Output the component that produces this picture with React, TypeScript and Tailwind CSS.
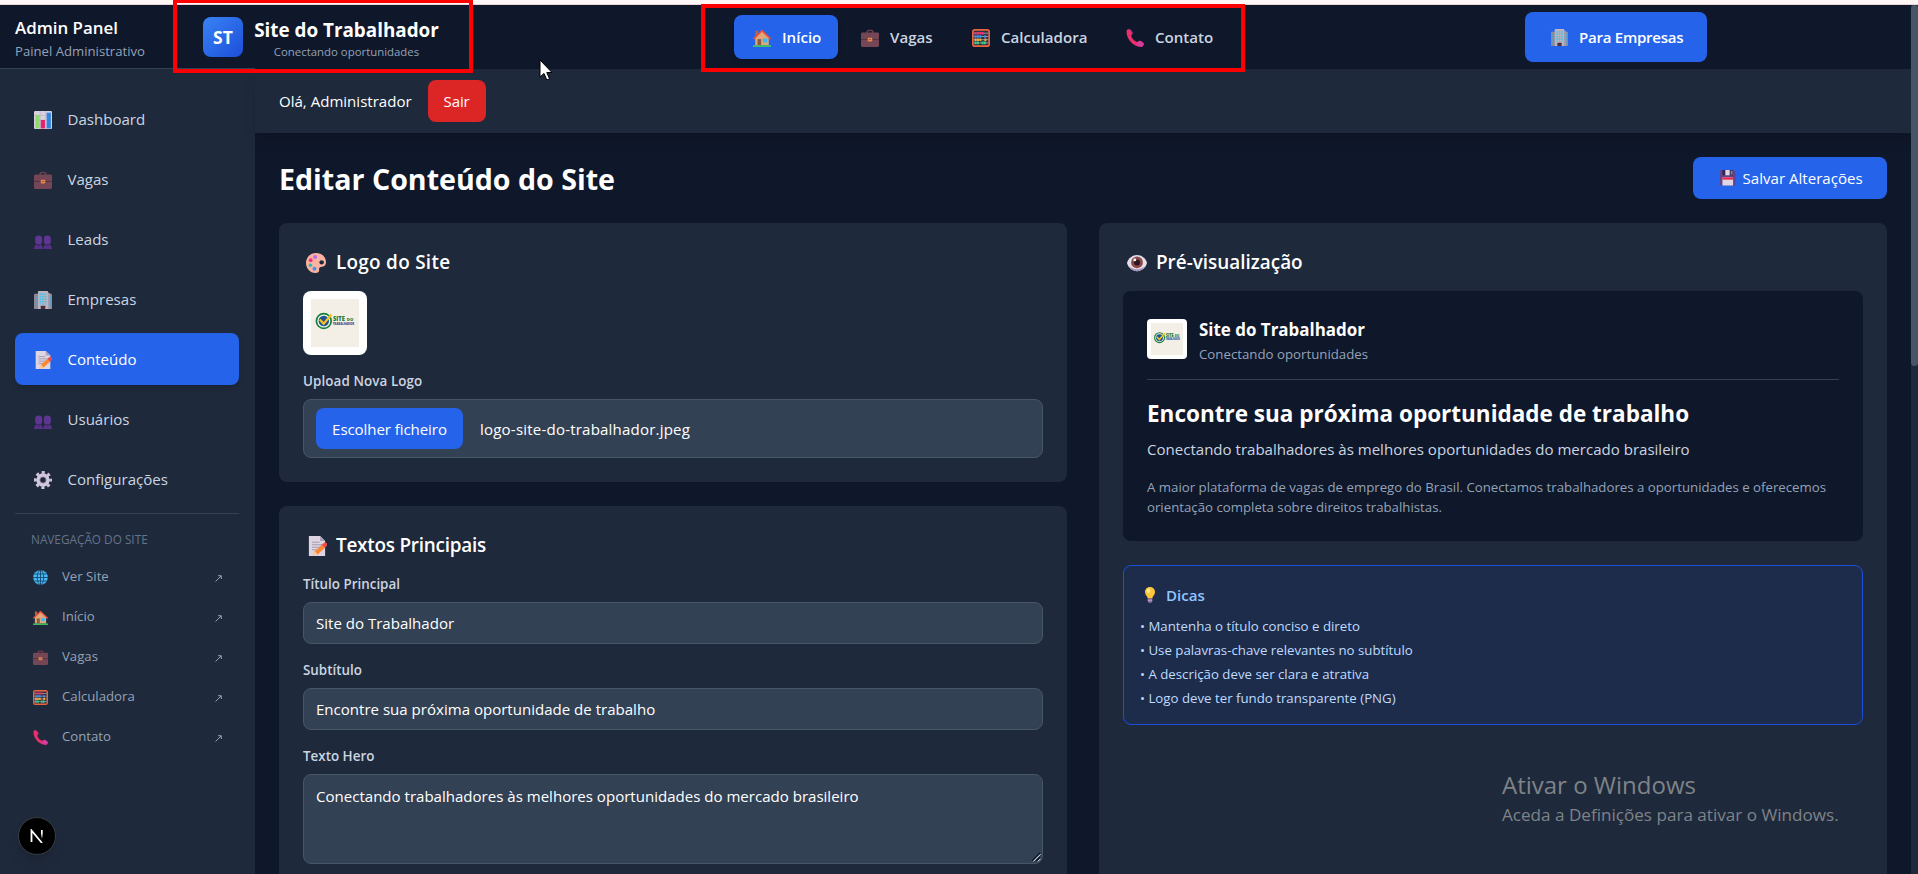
import type { ReactNode } from "react";

type IconName =
  | "chart" | "briefcase" | "people" | "building" | "memo" | "gear"
  | "globe" | "house" | "abacus" | "phone" | "disk" | "palette" | "eye" | "bulb";

const drawings: Record<IconName, ReactNode> = {
  chart: (
    <>
      <rect width="32" height="32" rx="2" fill="#d9d0e0" />
      <path d="M0 8h32M0 16h32M0 24h32M11 0v32M21 0v32" stroke="#b9aec6" strokeWidth="1" />
      <rect x="2.500" y="7" width="7.500" height="24" fill="#8fdc6e" />
      <rect x="12" y="16" width="7.500" height="15" fill="#e3256f" />
      <rect x="22.500" y="3" width="7.500" height="28" fill="#2f87de" />
    </>
  ),
  briefcase: (
    <>
      <path d="M11 7V4.500a2 2 0 0 1 2-2h6a2 2 0 0 1 2 2V7" fill="none" stroke="#6b3f4c" strokeWidth="2.600" />
      <rect x="0" y="6" width="32" height="26" rx="2.500" fill="#754656" />
      <path d="M0 18.500h32" stroke="#55303d" strokeWidth="1.600" />
      <rect x="12" y="15.500" width="8" height="6.500" rx="1.500" fill="#e68a4e" />
      <path d="M14 18.700h4" stroke="#8a4a33" strokeWidth="1.400" />
    </>
  ),
  people: (
    <>
      <path d="M0 32c0-6 3-8.500 8-8.500s7.500 2.500 7.500 8.500z" fill="#573089" />
      <path d="M16.500 32c0-6 3-8.500 7.500-8.500s8 2.500 8 8.500z" fill="#573089" />
      <rect x="2" y="8" width="12.500" height="16" rx="6" fill="#5e358f" />
      <rect x="17.500" y="8" width="12.500" height="16" rx="6" fill="#5e358f" />
      <path d="M5 23h6l-1 4H6zM21 23h6l-1 4h-4z" fill="#472672" />
    </>
  ),
  building: (
    <>
      <rect x="0" y="5" width="32" height="27" rx="1.500" fill="#8f8796" />
      <rect x="7" y="0" width="18" height="32" rx="1.500" fill="#bdb4c0" />
      <path d="M25 2l4 3v27h-4z" fill="#a79eac" />
      <path d="M11.500 4v20M16 4v20M20.500 4v20" stroke="#41c3ee" strokeWidth="3" strokeDasharray="3 1.500" />
      <path d="M3.500 9v20M28.800 9v20" stroke="#41a9e0" strokeWidth="2.200" strokeDasharray="3 1.800" />
      <rect x="12" y="26" width="8" height="6" rx="1" fill="#4b2f3c" />
    </>
  ),
  memo: (
    <>
      <path d="M3 0h18l8 8v24H3z" fill="#ddd5e2" />
      <path d="M21 0l8 8h-8z" fill="#aba0b6" />
      <path d="M8 10h12M8 14h16M8 18h14M8 22h8" stroke="#a79bb3" strokeWidth="1.700" />
      <path d="M10 31l2.500-6.500L23.500 14l5 5L17 29.500z" fill="#f98a32" />
      <path d="M23.500 14l3-2.500a3 3 0 0 1 5 4.500l-3 3z" fill="#ef4b4b" />
      <path d="M10 31l2.500-6.500 4.500 5z" fill="#ffd0a0" />
    </>
  ),
  gear: (
    <>
      <circle cx="16" cy="16" r="13.500" fill="none" stroke="#cfc4dc" strokeWidth="5" strokeDasharray="5.600 5" strokeDashoffset="2.800" />
      <circle cx="16" cy="16" r="8.600" fill="none" stroke="#d3c9df" strokeWidth="6.500" />
      <circle cx="16" cy="16" r="5.600" fill="none" stroke="#8f83a0" strokeWidth="1.500" />
    </>
  ),
  globe: (
    <>
      <circle cx="16" cy="16" r="15.500" fill="#47b9f4" />
      <g fill="none" stroke="#14486f" strokeWidth="1.900">
        <ellipse cx="16" cy="16" rx="7" ry="15.500" />
        <path d="M16 0v32M0 16h32M3 8.500h26M3 23.500h26" />
      </g>
    </>
  ),
  house: (
    <>
      <path d="M4 3h5v9H4z" fill="#b9643f" />
      <path d="M4 15L16 4l12 11v14H4z" fill="#e0a877" />
      <path d="M1.500 17L16 3l14.500 14" fill="none" stroke="#e8503f" strokeWidth="2.800" strokeLinejoin="round" strokeLinecap="round" />
      <rect x="8" y="18" width="6.500" height="11" fill="#8b5a41" />
      <rect x="17.500" y="17" width="8" height="7" rx="1" fill="#43b6f5" />
      <path d="M0 30.300h32" stroke="#3fca62" strokeWidth="3" />
    </>
  ),
  abacus: (
    <>
      <rect x="1.500" y="1.500" width="29" height="29" rx="3.500" fill="#2a3242" stroke="#f0623d" strokeWidth="3" />
      <path d="M3 7.500h26M3 13.300h26M3 19h26M3 24.700h26" stroke="#aeb4c4" strokeWidth="1.400" />
      <g strokeWidth="4.600" strokeDasharray="3.600 0.600">
        <path d="M4.500 7.500h17" stroke="#ee3470" />
        <path d="M4.500 13.300h12.400M21.500 13.300h4" stroke="#3d90e8" />
        <path d="M4.500 19h12.400M22 19h4" stroke="#f6a93a" />
        <path d="M4.500 24.700h8.200M17 24.700h8.200" stroke="#3ecb82" />
      </g>
    </>
  ),
  phone: (
    <>
      <path d="M1 3C1 1 5-.500 7 1l4 5.500c1 1.600-1.500 3.500-2 5 1 5 6.500 10.500 11.500 11.500 1.500-.500 3.500-3 5-2l5.500 4c1.500 2-1 6.500-3 6.500C14 33 0 18 1 3z" fill="#ec2f6b" />
      <path d="M20.500 23c1.500-.500 3.500-3 5-2l5.500 4c1.500 2-1 6.500-3 6.500-3 .200-6.500-1-9.500-3z" fill="#d53aa0" />
      <path d="M7 1l4 5.500c1 1.600-1.500 3.500-2 5" fill="none" stroke="#a8348f" strokeWidth="2" />
    </>
  ),
  disk: (
    <>
      <path d="M0 2a2 2 0 0 1 2-2h26l4 4v26a2 2 0 0 1-2 2H2a2 2 0 0 1-2-2z" fill="#5f4590" />
      <rect x="5" y="0" width="22" height="11" fill="#35254f" />
      <rect x="11" y="0" width="9" height="11" fill="#ddd6e6" />
      <rect x="22" y="1.500" width="4" height="8" fill="#8a7ba5" />
      <rect x="5" y="15" width="22" height="17" fill="#dfd6e6" />
      <rect x="5" y="15" width="22" height="5" fill="#e5304f" />
    </>
  ),
  palette: (
    <>
      <path d="M16 0C6.500 0 0 7.500 0 16s6.500 16 15 16c4 0 6-1.500 6-4 0-3-.500-5 3-5.500C29 22 32 20 32 14.500 32 6 25 0 16 0z" fill="#fbb3a0" />
      <circle cx="25" cy="15" r="3.600" fill="#1e293b" />
      <circle cx="14.500" cy="6.500" r="3.200" fill="#c06af0" />
      <circle cx="7.500" cy="11.500" r="3" fill="#ee2f76" />
      <circle cx="7" cy="19.500" r="2.900" fill="#2fb9b4" />
      <circle cx="13.500" cy="25" r="3.200" fill="#4a90ea" />
    </>
  ),
  eye: (
    <>
      <path d="M0 16C2 8 9 3 16 3s14 5 16 13c-2 8-9 13-16 13S2 24 0 16z" fill="#e6dfec" />
      <path d="M2 20c3 6 8 9 14 9s11-3 14-9c-4 4-9 6-14 6S6 24 2 20z" fill="#a596b5" />
      <circle cx="16" cy="15" r="9.500" fill="#8d4b48" />
      <circle cx="16" cy="15" r="4.800" fill="#2b1523" />
      <circle cx="12.500" cy="11" r="2.300" fill="#fff" />
    </>
  ),
  bulb: (
    <>
      <path d="M16 0c6 0 10 4.500 10 10 0 6-5 8-5.500 13h-9C11 18 6 16 6 10 6 4.500 10 0 16 0z" fill="#fcc63c" />
      <ellipse cx="13" cy="7.500" rx="3.500" ry="4.500" fill="#ffe79a" />
      <path d="M11.500 23h9v5c0 2-2 4-4.500 4s-4.500-2-4.500-4z" fill="#8d6f9e" />
      <path d="M11.500 26.500h9" stroke="#cdbbd8" strokeWidth="1.500" />
    </>
  ),
};

function Icon({ name, className }: { name: IconName; className: string }) {
  return (
    <svg viewBox="0 0 32 32" className={`shrink-0 ${className}`} aria-hidden="true">
      {drawings[name]}
    </svg>
  );
}

function BrandImage({ className }: { className: string }) {
  return (
    <svg viewBox="0 0 48 48" className={className}>
      <rect width="48" height="48" fill="#f4efe6" />
      <circle cx="12.800" cy="22" r="7.400" fill="#f4efe6" stroke="#15803d" strokeWidth="1.700" />
      <circle cx="12.800" cy="22" r="5.200" fill="#1c5594" />
      <path d="M8.800 20.500l3.800 4.300L20.500 15.500" fill="none" stroke="#f5c022" strokeWidth="2.300" />
      <text x="22" y="21.500" className="font-['Open_Sans',sans-serif] text-[6.500px] font-extrabold" fill="#1a7d3f" textLength="12" lengthAdjust="spacingAndGlyphs">SITE</text>
      <text x="35.800" y="21.500" className="font-['Open_Sans',sans-serif] text-[4.200px] font-extrabold" fill="#1a7d3f" textLength="6.500">DO</text>
      <text x="21.700" y="26" className="font-['Open_Sans',sans-serif] text-[4.200px] font-extrabold" fill="#1c5594" textLength="21.500" lengthAdjust="spacingAndGlyphs">TRABALHADOR</text>
    </svg>
  );
}

const adminLinks: { icon: IconName; label: string; active?: boolean }[] = [
  { icon: "chart", label: "Dashboard" },
  { icon: "briefcase", label: "Vagas" },
  { icon: "people", label: "Leads" },
  { icon: "building", label: "Empresas" },
  { icon: "memo", label: "Conteúdo", active: true },
  { icon: "people", label: "Usuários" },
  { icon: "gear", label: "Configurações" },
];

const siteLinks: { icon: IconName; label: string }[] = [
  { icon: "globe", label: "Ver Site" },
  { icon: "house", label: "Início" },
  { icon: "briefcase", label: "Vagas" },
  { icon: "abacus", label: "Calculadora" },
  { icon: "phone", label: "Contato" },
];

const mainNav: { icon: IconName; label: string; size: string }[] = [
  { icon: "house", label: "Início", size: "w-[104px] bg-[#2563eb] text-white shadow-md" },
  { icon: "briefcase", label: "Vagas", size: "w-[107px] text-[#cbd5e1]" },
  { icon: "abacus", label: "Calculadora", size: "w-[150px] text-[#cbd5e1]" },
  { icon: "phone", label: "Contato", size: "w-[123px] text-[#cbd5e1]" },
];

function Header() {
  return (
    <header className="flex h-16 shrink-0 bg-[#0f172a]">
      <div className="w-[203px] border-b border-[#334155] pl-[15px] pt-[8.500px]">
        <div className="text-[16.900px]/[28px] font-semibold text-white">Admin Panel</div>
        <div className="-mt-px text-[13.150px]/[20px] text-[#94a3b8]">Painel Administrativo</div>
      </div>
      <div className="w-[52px] border-b border-[#334155] pt-3">
        <div className="flex size-10 items-center justify-center rounded-lg bg-linear-to-br from-[#3b82f6] to-[#1d4ed8] text-[17.500px] font-bold text-white">
          ST
        </div>
      </div>
      <div className="-ml-px w-[185px] whitespace-nowrap pt-[11px] text-center">
        <div className="text-[18.850px]/[28px] font-bold text-white">Site do Trabalhador</div>
        <div className="text-[11.400px]/[16px] text-[#94a3b8]">Conectando oportunidades</div>
      </div>
      <nav className="ml-[295px] flex items-center gap-1">
        {mainNav.map((item) => (
          <a key={item.label} className={`flex h-11 items-center gap-[11px] rounded-lg pl-[19px] text-[15.100px] font-semibold ${item.size}`}>
            <Icon name={item.icon} className="mt-0.5 size-[18px]" />
            {item.label}
          </a>
        ))}
      </nav>
      <a className="ml-[295px] mt-[7px] flex h-[50px] w-[182px] items-center gap-3 rounded-lg bg-[#2563eb] pl-[26px] text-[15.050px] font-semibold whitespace-nowrap text-white">
        <Icon name="building" className="size-[17px]" />
        <span className="-ml-px tracking-[-0.018em]">Para Empresas</span>
      </a>
    </header>
  );
}

function Sidebar() {
  return (
    <aside className="w-[255px] shrink-0 bg-[#1e293b] pl-[15px] pr-4 pt-6">
      <div className="flex flex-col gap-2">
        {adminLinks.map((item) => (
          <a
            key={item.label}
            className={`flex h-[52px] items-center gap-[15.500px] rounded-lg pl-[19px] text-[15.050px] ${
              item.active ? "bg-[#2563eb] text-white shadow-md" : "text-[#cbd5e1]"
            }`}
          >
            <Icon name={item.icon} className="mt-0.5 size-[18px]" />
            {item.label}
          </a>
        ))}
      </div>
      <div className="mt-2 border-t border-[#334155] pl-4 pt-4">
        <div className="text-[11.800px]/[18px] font-medium text-[#64748b]">NAVEGAÇÃO DO SITE</div>
      </div>
      <div className="mt-[11px] flex flex-col gap-1 pl-[18px] pr-[17px]">
        {siteLinks.map((item) => (
          <a key={item.label} className="flex h-9 items-center gap-3.5 text-[13.200px] text-[#94a3b8]">
            <Icon name={item.icon} className="size-[15px]" />
            <span className="flex-1">{item.label}</span>
            <svg viewBox="0 0 7 7" className="mt-0.5 size-[7px]" fill="none" stroke="currentColor">
              <path d="M.500 6.500L6 1M3 .700h3.300V4" />
            </svg>
          </a>
        ))}
      </div>
    </aside>
  );
}

function CardTitle({ icon, children }: { icon: ReactNode; children: ReactNode }) {
  return (
    <h2 className="mb-4 flex h-7 items-center pt-[3px] text-[18.900px]/[25px] font-semibold text-white">
      <span className="flex w-[33px] shrink-0">{icon}</span>
      {children}
    </h2>
  );
}

const labelClass = "mb-2 block text-[13.400px]/[20px] font-semibold text-[#cbd5e1]";
const fieldClass = "block w-full rounded-lg border border-[#475569] bg-[#334155] px-3 text-[15.050px] text-white outline-none";

function Editor() {
  return (
    <div className="flex flex-col gap-6">
      <section className="h-[259px] rounded-lg bg-[#1e293b] p-6">
        <CardTitle icon={<Icon name="palette" className="ml-[3px] size-5" />}>
          <span className="tracking-[0.015em]">Logo do Site</span>
        </CardTitle>
        <div className="mb-4 size-16 rounded-lg bg-white p-2">
          <BrandImage className="size-12" />
        </div>
        <label className={`${labelClass} tracking-[0.007em]`}>Upload Nova Logo</label>
        <div className="flex h-[59px] items-center gap-[17px] rounded-lg border border-[#475569] bg-[#334155] px-3 text-[15.050px] text-white">
          <button className="h-[41px] w-[147px] rounded-lg bg-[#2563eb] pt-px tracking-[-0.005em]">Escolher ficheiro</button>
          <span className="pt-px tracking-[0.013em]">logo-site-do-trabalhador.jpeg</span>
        </div>
      </section>
      <section className="h-[420px] rounded-lg bg-[#1e293b] p-6">
        <CardTitle icon={<Icon name="memo" className="ml-1 size-5" />}>
          <span className="tracking-[-0.012em]">Textos Principais</span>
        </CardTitle>
        <label className={labelClass}>Título Principal</label>
        <input className={`${fieldClass} mb-4 h-[42px]`} defaultValue="Site do Trabalhador" />
        <label className={labelClass}>Subtítulo</label>
        <input className={`${fieldClass} mb-4 h-[42px]`} defaultValue="Encontre sua próxima oportunidade de trabalho" />
        <label className={labelClass}>Texto Hero</label>
        <div className="relative">
          <textarea
            className={`${fieldClass} h-[90px] resize-none pt-[9px] leading-6`}
            defaultValue="Conectando trabalhadores às melhores oportunidades do mercado brasileiro"
          />
          <svg viewBox="0 0 10 10" className="absolute bottom-0.5 right-0.5 size-2.5">
            <path d="M1 9L9 1M5.500 9L9 5.500" stroke="#0b1220" strokeWidth="1.300" />
            <path d="M2.200 9.500L9.500 2.200M6.800 9.500L9.500 6.800" stroke="#f1f5f9" strokeWidth="1" />
          </svg>
        </div>
      </section>
    </div>
  );
}

const tips = [
  "Mantenha o título conciso e direto",
  "Use palavras-chave relevantes no subtítulo",
  "A descrição deve ser clara e atrativa",
  "Logo deve ter fundo transparente (PNG)",
];

function Preview() {
  return (
    <section className="h-[703px] rounded-lg bg-[#1e293b] p-6">
      <CardTitle icon={<Icon name="eye" className="ml-1 size-5" />}>Pré-visualização</CardTitle>
      <div className="mb-6 h-[250px] rounded-lg bg-[#0f172a] p-6">
        <div className="flex h-[65px] items-start gap-3 border-b border-[#334155]">
          <div className="mt-1 size-10 rounded bg-white p-1">
            <BrandImage className="size-8" />
          </div>
          <div className="pt-px">
            <div className="text-[16.950px]/[28px] font-bold text-white">Site do Trabalhador</div>
            <div className="text-[13.250px]/[20px] text-[#94a3b8]">Conectando oportunidades</div>
          </div>
        </div>
        <h3 className="mt-[18px] text-[22.500px]/[32px] font-bold whitespace-nowrap text-white">
          Encontre sua próxima oportunidade de trabalho
        </h3>
        <p className="mt-[7px] text-[15.050px]/[24px] text-[#cbd5e1]">
          Conectando trabalhadores às melhores oportunidades do mercado brasileiro
        </p>
        <p className="mt-4 text-[13.240px]/[20px] text-[#94a3b8]">
          A maior plataforma de vagas de emprego do Brasil. Conectamos trabalhadores a oportunidades e oferecemos
          <br />
          orientação completa sobre direitos trabalhistas.
        </p>
      </div>
      <div className="h-40 rounded-lg border border-[#1d4ed8] bg-[#1e2c4c] p-4">
        <h4 className="flex h-[26px] items-center text-[15.050px] font-semibold text-[#93c5fd]">
          <Icon name="bulb" className="ml-0.5 mr-2 size-4" />
          Dicas
        </h4>
        <ul className="mt-2 flex flex-col gap-1 text-[13.250px]/[20px] text-[#bfdbfe]">
          {tips.map((tip) => (
            <li key={tip}>• {tip}</li>
          ))}
        </ul>
      </div>
    </section>
  );
}

export default function App() {
  return (
    <div className="relative flex h-[874px] w-full flex-col overflow-hidden bg-[#0f172a] font-['Open_Sans','Noto_Sans',sans-serif]">
      <div className="h-[5px] shrink-0 border-b border-[#ecd3d8] bg-[#fff6f6]" />
      <div className="flex min-h-0 flex-1">
        <div className="flex min-w-0 flex-1 flex-col">
          <Header />
          <div className="flex min-h-0 flex-1">
            <Sidebar />
            <div className="flex min-w-0 flex-1 flex-col">
              <div className="flex h-16 shrink-0 items-center bg-[#1e293b] pl-6 text-[15.050px] text-white shadow-lg">
                <span>Olá, Administrador</span>
                <button className="ml-4 h-[42px] w-[58px] rounded-lg bg-[#dc2626] tracking-[-0.01em]">Sair</button>
              </div>
              <main className="p-6">
                <div className="mb-6 flex h-[42px] items-center justify-between">
                  <h1 className="pt-[3px] text-[28.600px] font-bold text-white">Editar Conteúdo do Site</h1>
                  <button className="flex h-[42px] w-[194px] items-center gap-[7px] rounded-lg bg-[#2563eb] pl-[27px] text-[15.100px] whitespace-nowrap text-white">
                    <Icon name="disk" className="size-[15.500px]" />
                    Salvar Alterações
                  </button>
                </div>
                <div className="grid grid-cols-2 gap-8">
                  <Editor />
                  <Preview />
                </div>
              </main>
            </div>
          </div>
        </div>
        <div className="w-[7px] shrink-0 bg-[#1e293b]">
          <div className="h-[361px] rounded bg-[#475569]" />
        </div>
      </div>

      <div className="absolute left-[18px] top-[817px] flex size-[38px] items-center justify-center rounded-full border border-[#3a3d42] bg-black shadow-lg">
        <svg viewBox="0 0 14 14" className="size-3.5" fill="none" strokeWidth="1.800">
          <defs>
            <linearGradient id="fade" x1="0" y1="0" x2="0" y2="1">
              <stop offset="0.400" stopColor="#fff" />
              <stop offset="1" stopColor="#fff" stopOpacity="0.100" />
            </linearGradient>
          </defs>
          <path d="M1.500 13V1.500L12 14" stroke="#fff" />
          <rect x="11" y="1" width="1.700" height="8.500" fill="url(#fade)" />
        </svg>
      </div>

      <div className="absolute left-[1502px] top-[767px] whitespace-nowrap text-[#7f8388]">
        <div className="text-[24px]/[36px]">Ativar o Windows</div>
        <div className="text-[17.100px]/[24px]">Aceda a Definições para ativar o Windows.</div>
      </div>

      <div className="absolute -top-px left-[173px] h-[74px] w-[300px] border-4 border-[#fe0000]" />
      <div className="absolute left-[701px] top-[4px] h-[68px] w-[544px] border-4 border-[#fe0000]" />

      <svg viewBox="0 0 14 22" className="absolute left-[539px] top-[59px] h-[22px] w-3.5">
        <path d="M1 1v17l4-3.500 2.800 6.500 2.700-1.200L7.800 13.500H13z" fill="#fff" stroke="#000" strokeWidth="1" />
      </svg>
    </div>
  );
}
